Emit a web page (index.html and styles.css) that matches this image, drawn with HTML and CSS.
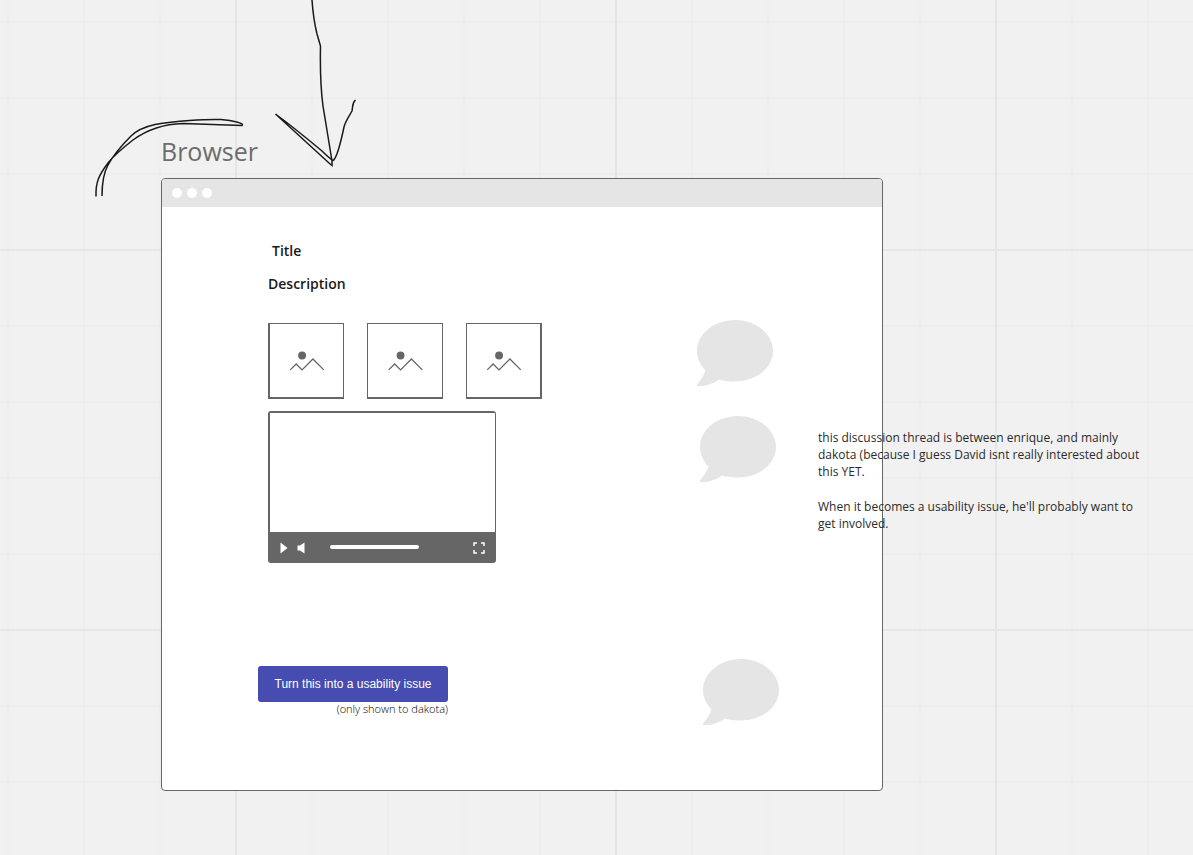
FILE: index.html
```html
<!DOCTYPE html>
<html lang="en">
<head>
<meta charset="utf-8">
<title>Whiteboard</title>
<link rel="stylesheet" href="styles.css">
</head>
<body>
<svg class="defs" aria-hidden="true">
  <symbol id="picture" viewBox="0 0 74 74">
    <circle cx="32.500" cy="32" r="4"/>
    <path d="M20.500 46.500L26.500 40.500L32.500 46.500L43.500 35.500L54.500 46.500" fill="none" stroke="#666" stroke-width="1.300"/>
  </symbol>
  <symbol id="bubble" viewBox="0 0 76 66">
    <path d="M38 0C59 0 76 14 76 31C76 48 59 61.500 38 61.500C32 61.500 27 61 22 59.500C15 64.500 8 66.500 0 66V64.500C4 60 7 55 8.500 50.500C3 45 0 38 0 31C0 14 17 0 38 0Z"/>
  </symbol>
</svg>
<main class="board">
  <h1 class="board-item frame-label">Browser</h1>
  <section class="board-item frame" aria-label="Browser">
    <div class="frame-bar"><i class="dot"></i><i class="dot"></i><i class="dot"></i></div>
    <div class="frame-body">
      <h2 class="heading heading-title">Title</h2>
      <h2 class="heading">Description</h2>
      <div class="pictures">
        <svg class="picture"><use href="#picture"/></svg>
        <svg class="picture"><use href="#picture"/></svg>
        <svg class="picture"><use href="#picture"/></svg>
      </div>
      <div class="player">
        <div class="screen"></div>
        <div class="controls">
          <button class="control" aria-label="Play"><svg width="8" height="12" viewBox="0 0 8 12"><path d="M0.500 0.500L7.500 6L0.500 11.500Z" fill="#fff"/></svg></button>
          <button class="control" aria-label="Mute"><svg width="8" height="12" viewBox="0 0 8 12"><path d="M0.500 3.500H3L7.500 0.500V11.500L3 8.500H0.500Z" fill="#fff"/></svg></button>
          <div class="track"></div>
          <button class="control" aria-label="Full screen"><svg width="12" height="12" viewBox="0 0 12 12"><path d="M1 4V1H4M8 1H11V4M11 8V11H8M4 11H1V8" fill="none" stroke="#fff" stroke-width="1.500"/></svg></button>
        </div>
      </div>
    </div>
  </section>
  <div class="board-item action">
    <button class="action-button">Turn this into a usability issue</button>
    <p class="action-hint">(only shown to dakota)</p>
  </div>
  <svg class="board-item bubble bubble-first"><use href="#bubble"/></svg>
  <svg class="board-item bubble bubble-second"><use href="#bubble"/></svg>
  <svg class="board-item bubble bubble-third"><use href="#bubble"/></svg>
  <div class="board-item note">
    <p>this discussion thread is between enrique, and mainly dakota (because I guess David isnt really interested about this YET.</p>
    <p>When it becomes a usability issue, he'll probably want to get involved.</p>
  </div>
  <svg class="board-item strokes" width="380" height="220" viewBox="0 0 380 220" aria-hidden="true">
    <path d="M96 196.500C95.500 182 99 175 108 163C114 155 124 147 133 140C144 132 162 124 183 123.500L242 125.500C245 123 232 120.500 221 119.500C205 119 175 121 155 124.500C144 127 137 130 131 136C124 143 113 156 108 165C103 174 102 183 102 196"/>
    <path d="M312 0C313 14 315 26 317 34L320.500 46C320 70 321 91 323 106L332 161V165.500L329 163L275.500 114C285 121 310 141 322 151Q329 158 333 160.500C336 159 340 146 344 127C346 120 350 115 352 111C353 106 352 103 355.500 100"/>
  </svg>
</main>
</body>
</html>
```

FILE: styles.css
```css
body {
  margin: 0;
  font-family: "Open Sans", "Noto Sans", sans-serif;
  color: #1a1a1a;
}

h1, h2, p {
  margin: 0;
}

.defs {
  position: absolute;
  width: 0;
  height: 0;
}

/* Canvas with a 76px grid and a heavier line every fifth cell */
.board {
  position: relative;
  min-height: 100vh;
  overflow: hidden;
  background-color: #f1f1f1;
  background-image:
    linear-gradient(90deg, #e5e5e5 2px, transparent 2px),
    linear-gradient(#e5e5e5 2px, transparent 2px),
    linear-gradient(90deg, #eee 2px, transparent 2px),
    linear-gradient(#eee 2px, transparent 2px);
  background-size: 380px 380px, 380px 380px, 76px 76px, 76px 76px;
  background-position: 235px 0, 0 249px, 7px 0, 0 21px;
}

.board-item {
  position: absolute;
}

.frame-label {
  left: 161px;
  top: 134px;
  font-size: 25px;
  line-height: 34px;
  font-weight: 400;
  color: #6c6c6c;
}

.frame {
  left: 161px;
  top: 178px;
  width: 720px;
  background: #fff;
  border: 1px solid #666;
  border-radius: 4px;
}

.frame-bar {
  display: flex;
  align-items: center;
  gap: 5px;
  height: 28px;
  padding-left: 10px;
  background: #e5e5e5;
  border-radius: 3px 3px 0 0;
}

.dot {
  width: 10px;
  height: 10px;
  border-radius: 50%;
  background: #fff;
}

.frame-body {
  padding: 34px 106px 227px;
}

.heading {
  margin-bottom: 13px;
  font-size: 14px;
  line-height: 20px;
  font-weight: 600;
}

.heading-title {
  padding-left: 4px;
}

.pictures {
  display: flex;
  gap: 23px;
  margin-top: 29px;
}

.picture {
  box-sizing: border-box;
  width: 76px;
  height: 76px;
  border: 1px solid #666;
  border-bottom-width: 2px;
  fill: #666;
}

.picture:first-child {
  border-left-width: 2px;
}

.picture:last-child {
  border-right-width: 2px;
}

.player {
  display: flex;
  flex-direction: column;
  width: 228px;
  margin-top: 12px;
  background: #666;
  border-radius: 3px;
}

.screen {
  height: 119px;
  margin: 2px 1px 0 2px;
  background: #fff;
}

.controls {
  display: flex;
  align-items: center;
  gap: 9px;
  height: 31px;
  padding: 0 11px 0 12px;
}

.control {
  display: flex;
  padding: 0;
  border: 0;
  background: none;
}

.track {
  width: 89px;
  height: 4px;
  margin: 0 auto 2px 16px;
  border-radius: 2px;
  background: #fff;
}

.action {
  left: 258px;
  top: 666px;
  width: 190px;
}

.action-button {
  display: block;
  width: 100%;
  height: 36px;
  padding: 0;
  border: 0;
  border-radius: 3px;
  background: #464cb0;
  color: #fff;
  font: 12px "Liberation Sans", Arial, sans-serif;
}

.action-hint {
  font-size: 11px;
  line-height: 14px;
  font-weight: 300;
  color: #000;
  text-align: right;
}

.bubble {
  width: 76px;
  height: 66px;
  fill: #e5e5e5;
}

.bubble-first {
  left: 697px;
  top: 320px;
}

.bubble-second {
  left: 700px;
  top: 416px;
}

.bubble-third {
  left: 703px;
  top: 659px;
}

.note {
  display: grid;
  gap: 18px;
  left: 818px;
  top: 429px;
  width: 332px;
  font-size: 12px;
  line-height: 17px;
  color: #2b2b2b;
}

.strokes {
  left: 0;
  top: 0;
  fill: none;
  stroke: #1a1a1a;
  stroke-width: 1.500px;
  pointer-events: none;
}
```
